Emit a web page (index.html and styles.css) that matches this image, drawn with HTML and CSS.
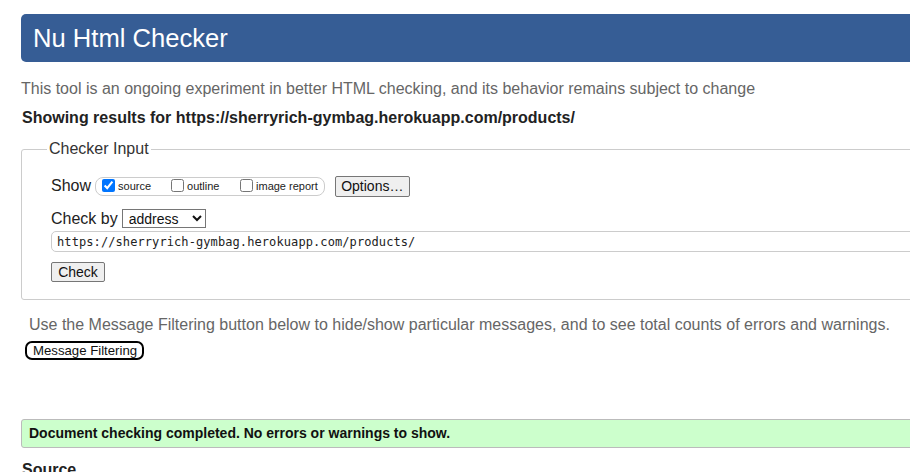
FILE: index.html
```html
<!DOCTYPE html>
<html lang="en">
<head>
<meta charset="utf-8">
<title>Nu Html Checker</title>
<link rel="stylesheet" href="styles.css">
</head>
<body>
<div class="page">
  <header class="banner"><h1 class="title">Nu Html Checker</h1></header>
  <p class="intro">This tool is an ongoing experiment in better HTML checking, and its behavior remains subject to change</p>
  <p class="showing">Showing results for https://sherryrich-gymbag.herokuapp.com/products/</p>
  <fieldset class="checker">
    <legend class="legend">Checker Input</legend>
    <div class="show-row">
      <span class="label">Show</span>
      <span class="opts">
        <label class="opt opt-source"><input type="checkbox" class="cb" checked><span>source</span></label>
        <label class="opt opt-outline"><input type="checkbox" class="cb"><span>outline</span></label>
        <label class="opt"><input type="checkbox" class="cb"><span>image report</span></label>
      </span>
      <button class="btn btn-options">Options…</button>
    </div>
    <div class="by-row">
      <span class="label">Check by</span>
      <select class="sel"><option>address</option></select>
    </div>
    <input class="url" type="text" value="https://sherryrich-gymbag.herokuapp.com/products/">
    <div class="submit-row"><button class="btn btn-check">Check</button></div>
  </fieldset>
  <p class="filter-note">Use the Message Filtering button below to hide/show particular messages, and to see total counts of errors and warnings.</p>
  <button class="filter-btn">Message Filtering</button>
  <div class="success">Document checking completed. No errors or warnings to show.</div>
  <h2 class="source">Source</h2>
</div>
</body>
</html>
```
FILE: styles.css
```css
html, body {
  margin: 0;
  padding: 0;
  overflow: hidden;
  background: #fff;
}
body {
  font-family: "Liberation Sans", Arial, sans-serif;
  color: #222;
}
.page {
  width: 1100px;
  padding: 14px 0 0 21px;
}
.banner {
  height: 48px;
  background: #365d95;
  border-radius: 5px;
  padding-left: 12px;
}
.title {
  margin: 0;
  font-size: 25.6px;
  font-weight: normal;
  line-height: 48px;
  color: #fff;
}
.intro {
  margin: 17px 0 0 0;
  font-size: 16px;
  line-height: 20px;
  color: #666;
}
.showing {
  margin: 9px 0 0 1px;
  font-size: 16px;
  line-height: 20px;
  font-weight: bold;
  color: #222;
}
.checker {
  margin: 12px 0 0 0;
  border: 1px solid #ccc;
  border-radius: 3px;
  padding: 0 0 17px 29px;
  min-width: 0;
}
.legend {
  margin-left: -4px;
  padding: 0 2px;
  font-size: 16px;
  line-height: 18px;
  color: #333;
}
.show-row {
  margin-top: 18px;
  display: flex;
  align-items: center;
  height: 20px;
}
.label {
  font-size: 16px;
  line-height: 20px;
  color: #222;
}
.opts {
  margin-left: 4px;
  display: flex;
  align-items: center;
  height: 17px;
  border: 1px solid #ccc;
  border-radius: 8px;
  padding: 0 6px 0 2px;
}
.opt {
  display: flex;
  align-items: center;
  font-size: 11px;
  color: #222;
}
.opt-source { width: 69px; }
.opt-outline { width: 69px; }
.cb {
  width: 13px;
  height: 13px;
  margin: 0 3px 2px 4px;
}
.btn {
  font-family: "Liberation Sans", Arial, sans-serif;
  font-size: 14px;
  color: #111;
  background: #efefef;
  border: 1px solid #767676;
  border-radius: 2px;
  padding: 0 6px;
}
.btn-options {
  margin-left: 10px;
  width: 75px;
  height: 21px;
  padding: 0;
}
.by-row {
  margin-top: 13px;
  display: flex;
  align-items: center;
  height: 19px;
}
.sel {
  margin-left: 4px;
  width: 84px;
  height: 19px;
  font-family: "Liberation Sans", Arial, sans-serif;
  font-size: 14px;
  border: 1px solid #767676;
  border-radius: 0;
  background: #fff;
  color: #111;
  padding: 0 0 0 2px;
}
.url {
  display: block;
  box-sizing: border-box;
  margin-top: 3px;
  width: 1000px;
  height: 21px;
  border: 1px solid #ccc;
  border-radius: 5px;
  padding: 0 5px;
  font-family: "DejaVu Sans Mono", monospace;
  font-size: 12px;
  letter-spacing: 0.09px;
  color: #222;
}
.submit-row {
  margin-top: 10px;
  height: 20px;
  display: flex;
}
.btn-check {
  height: 20px;
  width: 54px;
  padding: 0;
}
.filter-note {
  margin: 15px 0 0 8px;
  font-size: 16px;
  line-height: 20px;
  color: #666;
}
.filter-btn {
  display: block;
  margin: 6px 0 0 4px;
  height: 19px;
  padding: 0 5px 0 6px;
  font-family: "Liberation Sans", Arial, sans-serif;
  font-size: 13.2px;
  line-height: 15px;
  color: #111;
  background: #fff;
  border: 2px solid #000;
  border-radius: 7px;
}
.success {
  margin-top: 59px;
  height: 27px;
  line-height: 27px;
  background: #ccffcc;
  border: 1px solid #bbb;
  border-radius: 3px 0 0 3px;
  padding-left: 7px;
  font-size: 14px;
  font-weight: bold;
  color: #111;
}
.source {
  margin: 12px 0 0 1px;
  font-size: 16px;
  line-height: 20px;
  font-weight: bold;
  color: #222;
}
```
